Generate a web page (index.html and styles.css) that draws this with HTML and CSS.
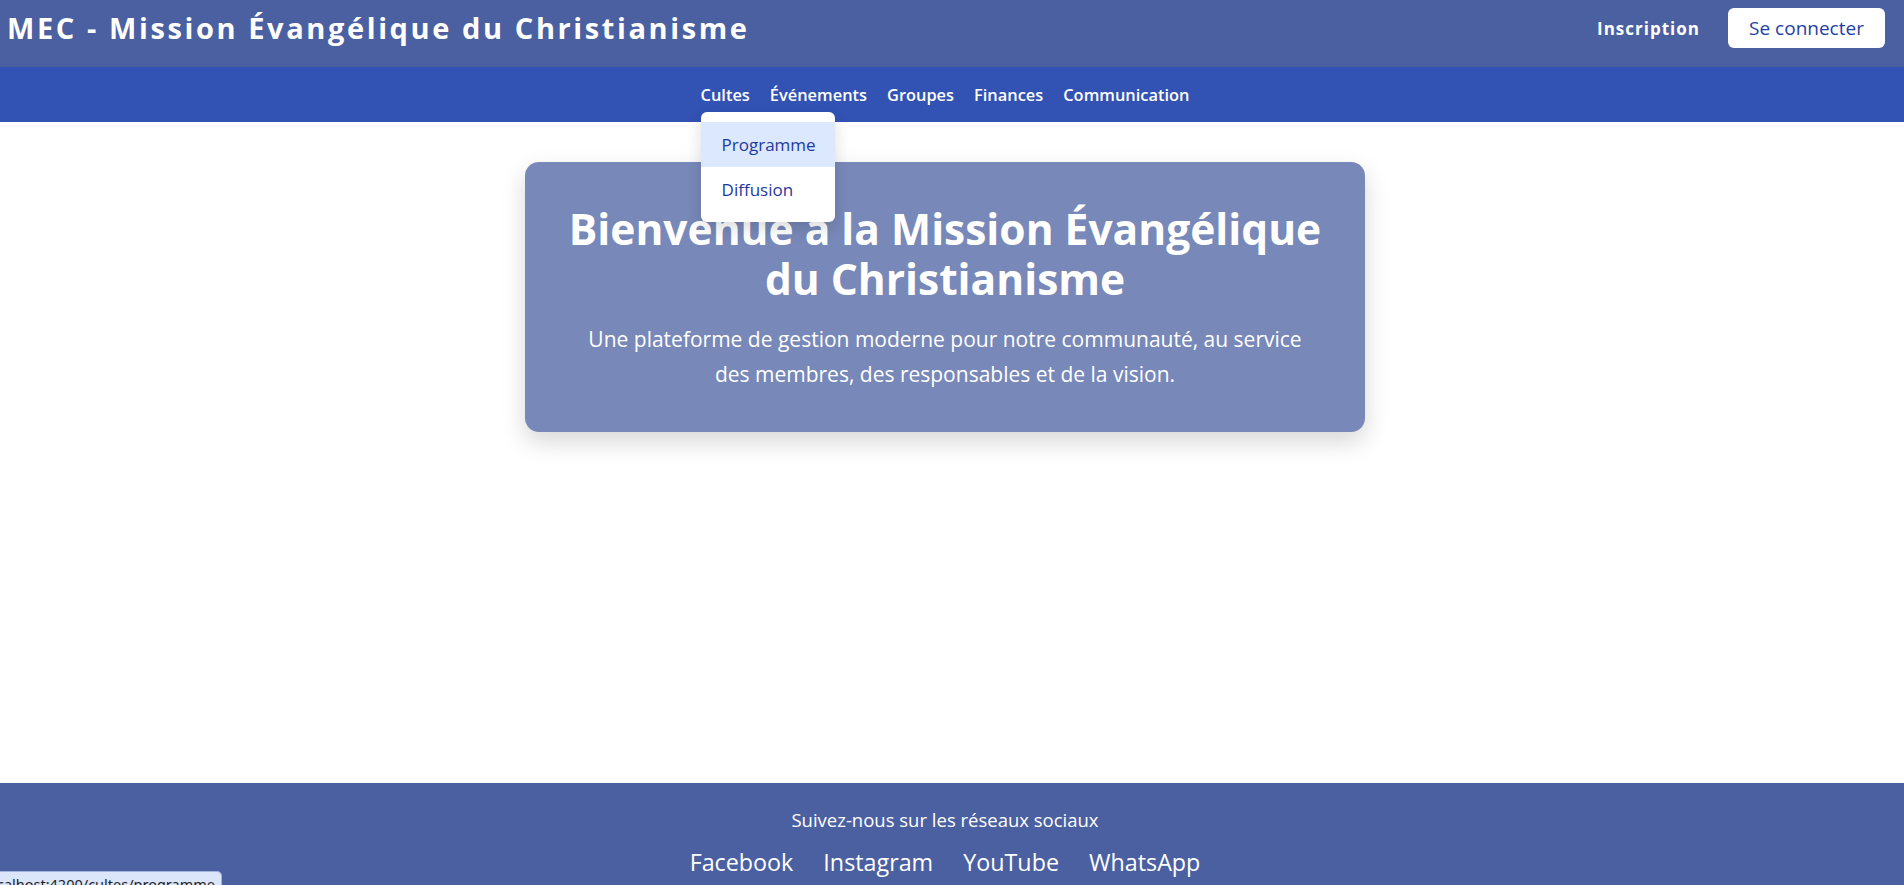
FILE: index.html
```html
<!DOCTYPE html>
<html lang="fr">
<head>
<meta charset="utf-8">
<title>MEC - Mission Évangélique du Christianisme</title>
<link rel="stylesheet" href="styles.css">
</head>
<body>
<header class="topbar">
  <h1 class="brand">MEC - Mission Évangélique du Christianisme</h1>
  <div class="auth">
    <a class="register" href="#">Inscription</a>
    <a class="login" href="#">Se connecter</a>
  </div>
</header>
<nav class="mainnav">
  <ul class="menu">
    <li class="menu-item">
      <a class="menu-link" href="#">Cultes</a>
      <ul class="dropdown">
        <li><a class="dropdown-link active" href="#">Programme</a></li>
        <li><a class="dropdown-link" href="#">Diffusion</a></li>
      </ul>
    </li>
    <li class="menu-item"><a class="menu-link" href="#">Événements</a></li>
    <li class="menu-item"><a class="menu-link" href="#">Groupes</a></li>
    <li class="menu-item"><a class="menu-link" href="#">Finances</a></li>
    <li class="menu-item"><a class="menu-link" href="#">Communication</a></li>
  </ul>
</nav>
<main class="content">
  <section class="hero">
    <h2 class="hero-title">Bienvenue à la Mission Évangélique<br>du Christianisme</h2>
    <p class="hero-text">Une plateforme de gestion moderne pour notre communauté, au service<br>des membres, des responsables et de la vision.</p>
  </section>
</main>
<footer class="footer">
  <p class="footer-title">Suivez-nous sur les réseaux sociaux</p>
  <div class="social">
    <a href="#">Facebook</a>
    <a href="#">Instagram</a>
    <a href="#">YouTube</a>
    <a href="#">WhatsApp</a>
  </div>
</footer>
<div class="status"><span class="status-text">localhost:4200/cultes/programme</span></div>
</body>
</html>
```
FILE: styles.css
```css
* { box-sizing: border-box; }

html, body {
  margin: 0;
  padding: 0;
}

body {
  font-family: "Open Sans", "Noto Sans", "Liberation Sans", sans-serif;
  color: #ffffff;
  background: #ffffff;
  overflow: hidden;
}

a { text-decoration: none; color: inherit; }

.topbar {
  height: 67px;
  background: #4b60a1;
  display: flex;
  align-items: center;
  justify-content: space-between;
  padding: 0 19px 11px 7px;
}

.brand {
  margin: 0;
  font-size: 29px;
  font-weight: 700;
  letter-spacing: 2.6px;
  line-height: 36px;
  white-space: nowrap;
}

.auth {
  display: flex;
  align-items: center;
  gap: 28px;
}

.register {
  font-size: 17px;
  font-weight: 700;
  letter-spacing: 1px;
  color: #ffffff;
}

.login {
  display: flex;
  align-items: center;
  justify-content: center;
  width: 157px;
  height: 40px;
  background: #ffffff;
  border-radius: 6px;
  color: #1f3ea8;
  font-size: 19px;
  font-weight: 500;
}

.mainnav {
  height: 55px;
  background: #3252b4;
  padding-right: 14px;
}

.menu {
  list-style: none;
  margin: 0;
  padding: 0;
  height: 100%;
  display: flex;
  justify-content: center;
  gap: 20px;
}

.menu-item {
  position: relative;
  display: flex;
  align-items: center;
}

.menu-link {
  font-size: 16.4px;
  font-weight: 600;
  color: #ffffff;
}

.dropdown {
  position: absolute;
  top: 45px;
  left: 0;
  width: 134px;
  list-style: none;
  margin: 0;
  padding: 10px 0;
  background: #ffffff;
  border-radius: 6px;
  box-shadow: 0 6px 16px rgba(0, 0, 0, 0.14);
  z-index: 10;
}

.dropdown-link {
  display: flex;
  align-items: center;
  height: 45px;
  padding-left: 21px;
  font-size: 17px;
  font-weight: 500;
  color: #1e3a9e;
}

.dropdown-link.active {
  background: #dbe8fe;
}

.content {
  height: 661px;
  padding: 40px 14px 0 0;
  display: flex;
  justify-content: center;
  align-items: flex-start;
}

.hero {
  width: 840px;
  height: 270px;
  background: #7888b8;
  border-radius: 14px;
  box-shadow: 0 10px 25px rgba(0, 0, 0, 0.16);
  padding: 42px 10px 0;
  text-align: center;
}

.hero-title {
  margin: 0;
  font-size: 42.5px;
  line-height: 50px;
  font-weight: 700;
  color: #ffffff;
}

.hero-text {
  margin: 18px 0 0;
  font-size: 21px;
  line-height: 35px;
  color: #ffffff;
  white-space: nowrap;
}

.footer {
  height: 120px;
  background: #4b60a1;
  padding: 23px 14px 0 0;
  text-align: center;
}

.footer-title {
  margin: 0;
  font-size: 18.5px;
  line-height: 27px;
}

.social {
  margin-top: 13px;
  display: flex;
  justify-content: center;
  gap: 30px;
  font-size: 23.3px;
  line-height: 32px;
}

.social a { color: #ffffff; }

.status {
  position: fixed;
  left: 0;
  top: 871px;
  width: 222px;
  height: 30px;
  display: flex;
  justify-content: flex-end;
  overflow: hidden;
  padding: 3px 6px 0 0;
  background: #dbe6fb;
  border: 1px solid #a3b6df;
  border-left: none;
  border-radius: 0 5px 0 0;
  font-family: "Noto Sans", "Liberation Sans", sans-serif;
  font-size: 14.5px;
  line-height: 18px;
  color: #1f1f1f;
  white-space: nowrap;
}

.status-text {
  flex-shrink: 0;
}
```
